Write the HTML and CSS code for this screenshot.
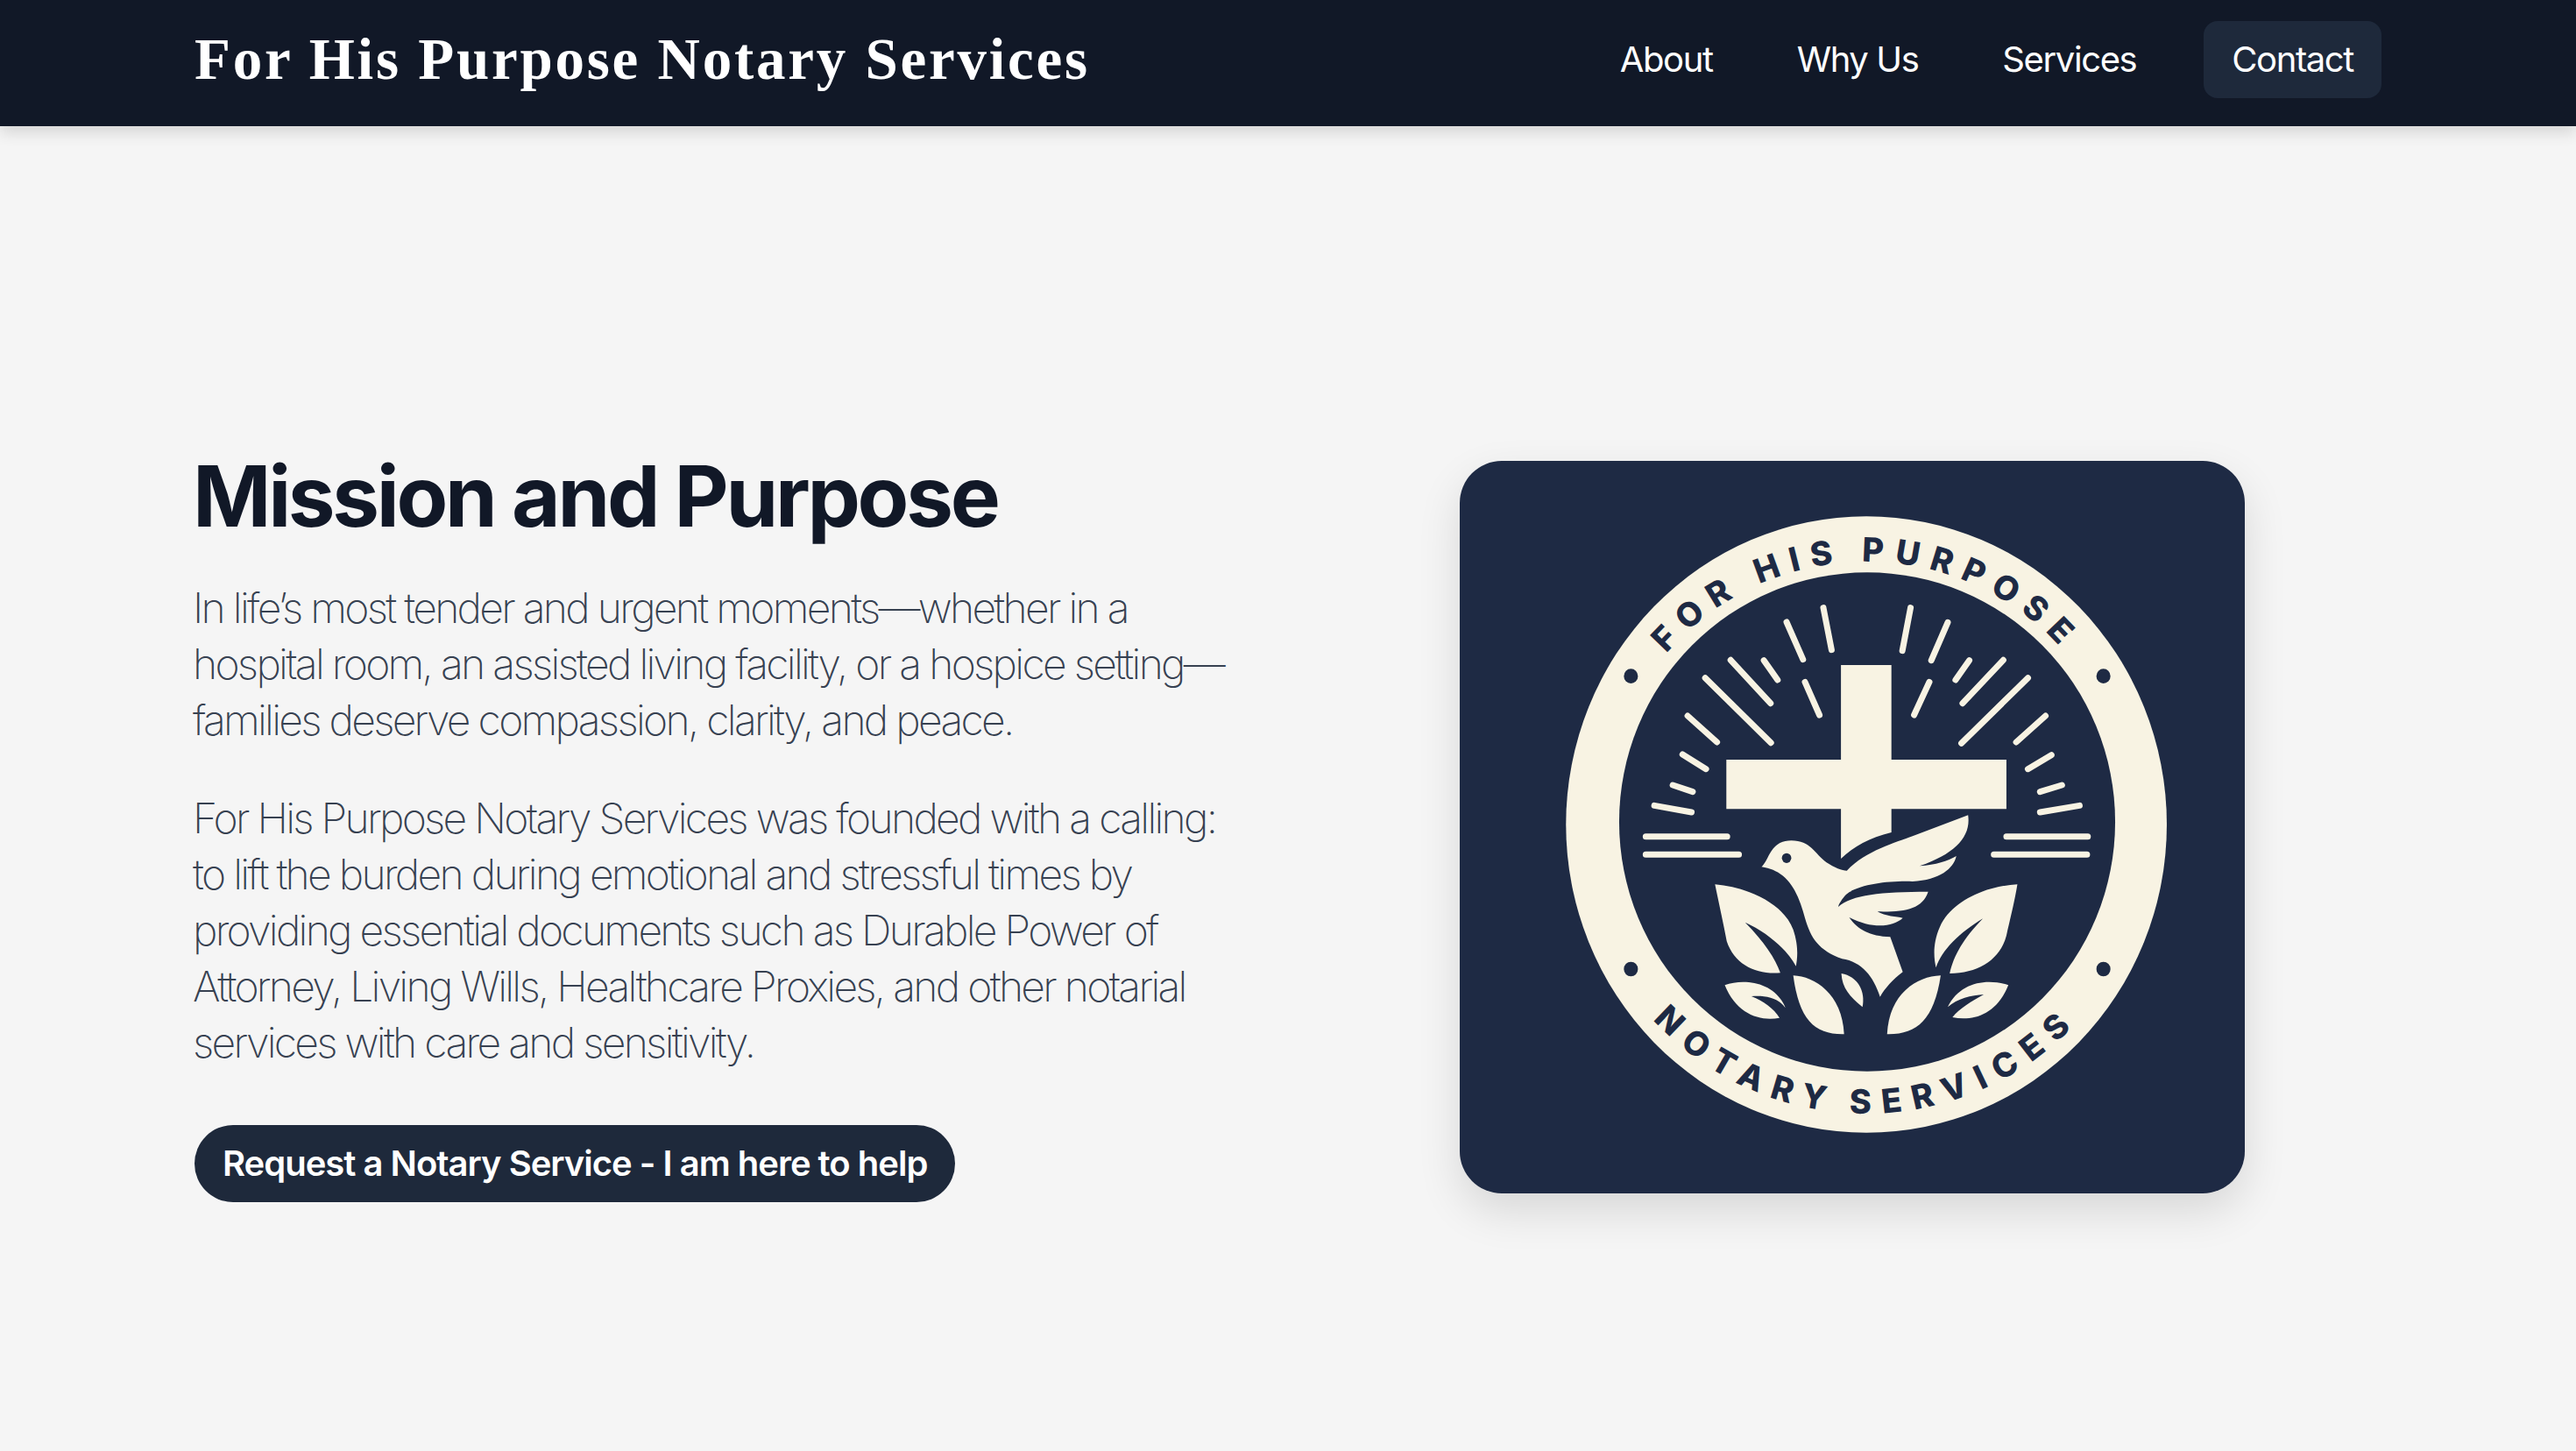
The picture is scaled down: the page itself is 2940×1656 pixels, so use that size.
FILE: index.html
```html
<!DOCTYPE html>
<html lang="en">
<head>
<meta charset="utf-8">
<title>For His Purpose Notary Services</title>
<link rel="stylesheet" href="styles.css">
</head>
<body>
<header class="site-header">
  <a class="brand" href="#">For His Purpose Notary Services</a>
  <nav class="nav">
    <a class="nav-link" href="#">About</a>
    <a class="nav-link" href="#">Why Us</a>
    <a class="nav-link" href="#">Services</a>
    <a class="nav-link nav-link-active" href="#">Contact</a>
  </nav>
</header>
<main class="hero">
  <section class="hero-copy">
    <h1 class="hero-title">Mission and Purpose</h1>
    <p class="hero-text">In life’s most tender and urgent moments—whether in a hospital room, an assisted living facility, or a hospice setting—families deserve compassion, clarity, and peace.</p>
    <p class="hero-text">For His Purpose Notary Services was founded with a calling: to lift the burden during emotional and stressful times by providing essential documents such as Durable Power of Attorney, Living Wills, Healthcare Proxies, and other notarial services with care and sensitivity.</p>
    <a class="cta" href="#">Request a Notary Service - I am here to help</a>
  </section>
  <div class="hero-media">
    <svg class="logo" viewBox="0 0 896 836" role="img" aria-label="For His Purpose Notary Services logo">
      <defs>
        <path id="arc-top" d="M164 415 A300 300 0 0 1 764 415"/>
        <path id="arc-bottom" d="M134 415 A330 330 0 0 0 794 415"/>
      </defs>
      <g transform="translate(115 55) scale(.44643 .33333)">
        <ellipse class="cream" cx="782" cy="1080" rx="768" ry="1055"/>
        <ellipse class="navy" cx="784" cy="1071" rx="634" ry="854"/>
        <ellipse class="dot" cx="180" cy="572" rx="18" ry="25"/>
        <ellipse class="dot" cx="1388" cy="572" rx="18" ry="25"/>
        <ellipse class="dot" cx="180" cy="1575" rx="18" ry="25"/>
        <ellipse class="dot" cx="1388" cy="1575" rx="18" ry="25"/>
        <g class="rays">
          <path d="M672 338 693 482M578 387 620 515M520 518 555 585M435 517 537 665M370 578 538 800M625 592 662 705M325 708 400 798M312 840 372 890M287 945 338 968M240 1015 335 1038"/>
          <path d="M895 338 874 485M990 388 948 518M1045 518 1010 585M1132 517 1028 665M1195 578 1025 802M943 592 904 705M1240 708 1165 798M1255 842 1195 890M1282 945 1226 968M1327 1015 1226 1038"/>
          <path d="M218 1121H426M218 1183H456M1140 1121H1348M1108 1183H1346"/>
        </g>
        <path class="cream" d="M717 534H846V858H1140V1027H846V1107C790 1125 750 1155 717 1197V1027H424V858H717Z"/>
        <path class="cream" d="M514 1225C535 1200 535 1135 590 1135C640 1135 650 1180 680 1210C700 1228 720 1238 732 1238C780 1170 860 1140 900 1120L1042 1048C1050 1120 1010 1180 918 1222C960 1218 990 1205 1012 1188C1005 1230 970 1270 900 1275C840 1272 760 1285 730 1320C720 1335 712 1350 710 1362C745 1320 820 1310 940 1310C925 1370 880 1380 810 1378C830 1395 860 1395 875 1400C850 1430 800 1440 738 1398C760 1440 790 1462 843 1465L875 1585C850 1610 830 1640 817 1670C800 1600 770 1550 720 1540C660 1510 640 1470 625 1400C610 1330 590 1240 514 1225Z"/>
        <ellipse class="dot" cx="578" cy="1195" rx="12" ry="17"/>
        <path class="cream" d="M395 1285C480 1295 570 1350 595 1440C610 1500 605 1540 602 1565C580 1510 530 1450 472 1415C520 1480 550 1540 562 1588C500 1595 445 1560 425 1480C415 1410 405 1350 395 1285Z"/>
        <path class="cream" d="M1168 1285C1090 1290 1000 1340 970 1430C950 1490 955 1540 960 1570C975 1510 1020 1450 1080 1402C1030 1470 1005 1530 995 1590C1070 1590 1125 1540 1140 1460C1150 1400 1160 1350 1168 1285Z"/>
        <path class="cream" d="M420 1630C470 1605 550 1620 575 1708C555 1670 520 1665 488 1668C520 1685 545 1710 560 1742C510 1755 450 1730 420 1630Z"/>
        <path class="cream" d="M1145 1630C1090 1605 1020 1620 990 1705C1015 1675 1050 1665 1082 1662C1050 1685 1020 1710 1002 1740C1055 1755 1115 1730 1145 1630Z"/>
        <path class="cream" d="M595 1597C650 1600 720 1660 725 1798C650 1800 610 1750 595 1597Z"/>
        <path class="cream" d="M718 1590C760 1600 780 1650 772 1705C740 1670 720 1640 718 1590Z"/>
        <path class="cream" d="M972 1597C910 1600 840 1660 835 1798C910 1800 955 1750 972 1597Z"/>
      </g>
      <text class="logo-text"><textPath href="#arc-top" startOffset="50%">FOR HIS PURPOSE</textPath></text>
      <text class="logo-text logo-text-bottom"><textPath href="#arc-bottom" startOffset="50%">NOTARY SERVICES</textPath></text>
    </svg>
  </div>
</main>
</body>
</html>
```
FILE: styles.css
```css
* { box-sizing: border-box; }
html, body { margin: 0; padding: 0; }
body {
  min-height: 1656px;
  background: #f5f5f5;
  color: #111827;
  font-family: Inter, "Liberation Sans", sans-serif;
}
a { text-decoration: none; color: inherit; }

.site-header {
  display: flex;
  align-items: center;
  justify-content: space-between;
  height: 144px;
  padding: 0 222px 8px;
  background: #111827;
  box-shadow: 0 8px 16px rgba(0, 0, 0, .12);
}
.brand {
  color: #fff;
  font-family: "Liberation Serif", serif;
  font-size: 67px;
  font-weight: 700;
  letter-spacing: 2.75px;
  line-height: 88px;
  margin-top: -2px;
}
.nav { display: flex; gap: 32px; }
.nav-link {
  padding: 16px 32px;
  border-radius: 16px;
  color: #fff;
  font-size: 40px;
  line-height: 56px;
  letter-spacing: -1.4px;
}
.nav-link-active { margin-left: 13px; background: #1e293b; }

.hero {
  display: grid;
  grid-template-columns: 1fr 1fr;
  gap: 80px;
  align-items: center;
  padding: 372px 222px 0;
}
.hero-title {
  margin: 0 0 46px -2px;
  color: #111827;
  font-size: 96px;
  font-weight: 700;
  line-height: 100px;
  letter-spacing: -3.3px;
}
.hero-text {
  max-width: 1190px;
  margin: 0 0 48px -2px;
  color: #374151;
  font-size: 48px;
  font-weight: 200;
  line-height: 64px;
  letter-spacing: -2.7px;
}
.hero-text + .cta { margin-top: 14px; }
.cta {
  display: inline-block;
  padding: 16px 32px;
  border-radius: 44px;
  background: #1e293b;
  color: #fff;
  font-size: 40px;
  font-weight: 600;
  line-height: 56px;
  letter-spacing: -1px;
}
.hero-media { display: flex; justify-content: center; }
.logo {
  display: block;
  width: 896px;
  height: 836px;
  border-radius: 48px;
  background: #1e2a44;
  box-shadow: 0 20px 50px rgba(0, 0, 0, .12);
}
.cream { fill: #f8f3e3; }
.navy, .dot { fill: #1e2a44; }
.rays {
  fill: none;
  stroke: #f8f3e3;
  stroke-width: 7px;
  stroke-linecap: round;
}
.rays path { vector-effect: non-scaling-stroke; }
.logo-text {
  fill: #1e2a44;
  font-family: Inter, sans-serif;
  font-size: 38px;
  font-weight: 800;
  letter-spacing: 12px;
  text-anchor: middle;
}
.logo-text-bottom { letter-spacing: 13px; word-spacing: -6px; }
```
